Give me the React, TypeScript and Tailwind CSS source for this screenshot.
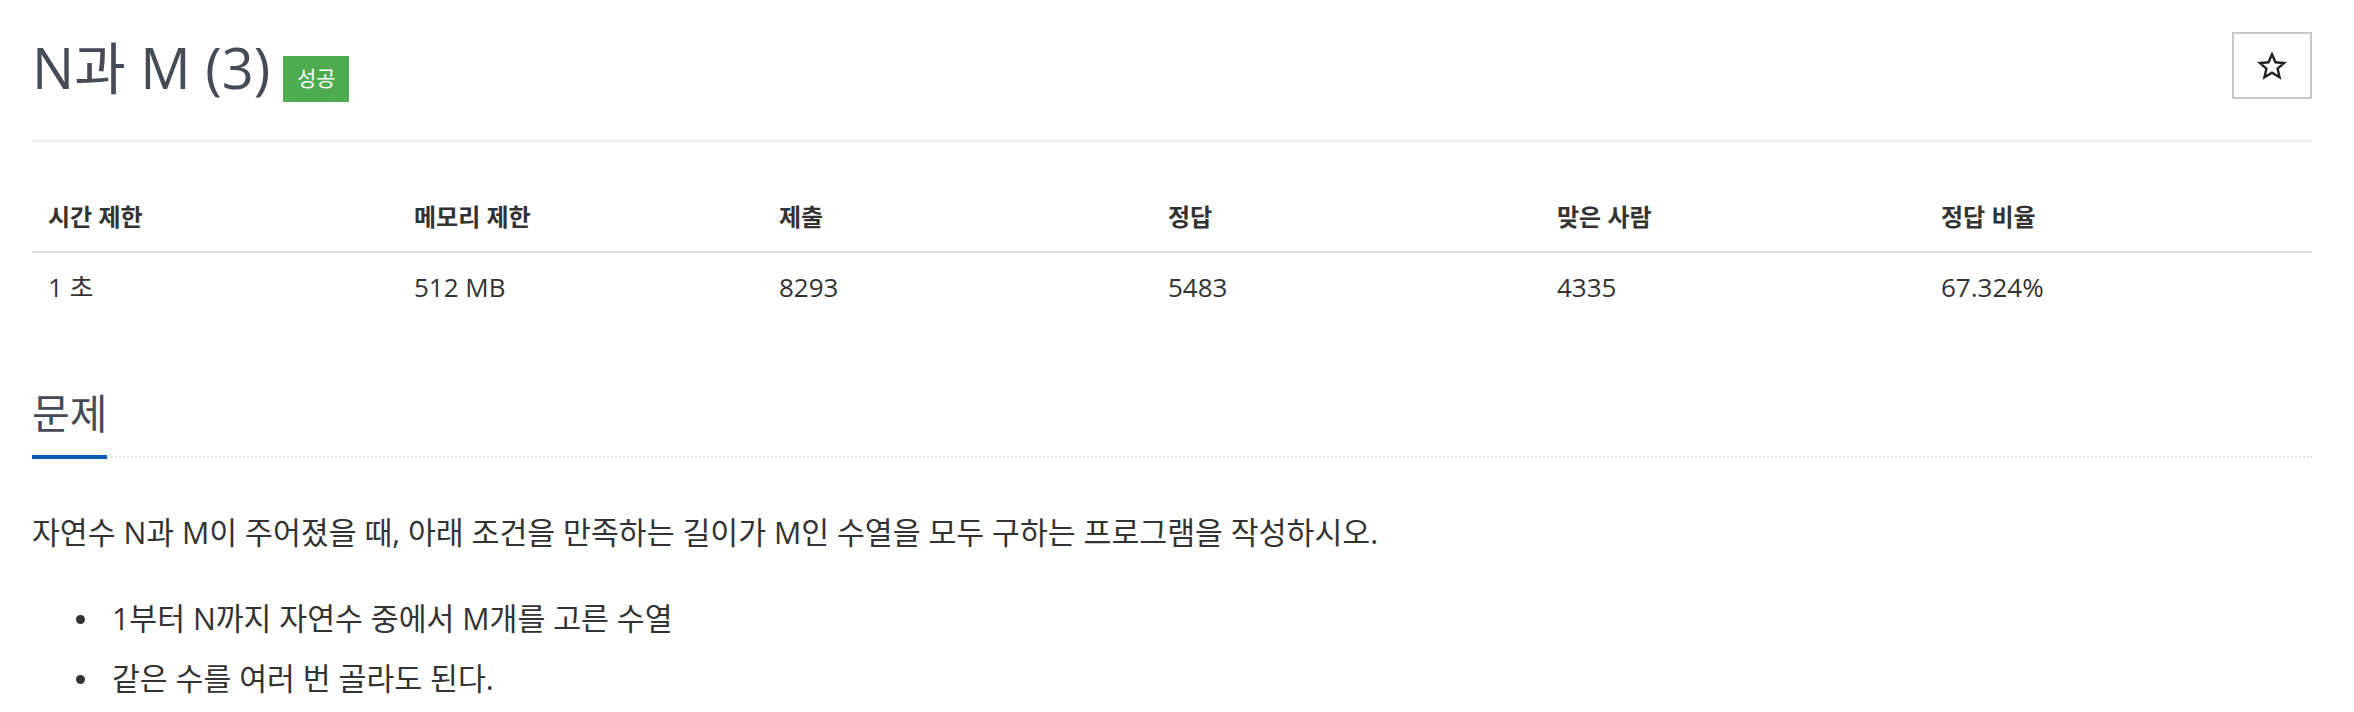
import React from 'react'

const font = { fontFamily: '"Open Sans", "Noto Sans CJK KR", sans-serif' }

const headers = ['시간 제한', '메모리 제한', '제출', '정답', '맞은 사람', '정답 비율']
const values = ['1 초', '512 MB', '8293', '5483', '4335', '67.324%']
const widths = ['w-[366px]', 'w-[365px]', 'w-[389px]', 'w-[389px]', 'w-[384px]', 'w-[387px]']

function StarIcon() {
  return (
    <svg width="30" height="28" viewBox="0 0 24 23" fill="none">
      <path
        d="M12 1.8l2.9 6.6 7.1.6-5.4 4.7 1.6 7-6.2-3.7-6.2 3.7 1.6-7L2 9l7.1-.6z"
        stroke="#222"
        strokeWidth="2"
        strokeLinejoin="miter"
      />
    </svg>
  )
}

export default function App() {
  return (
    <div className="min-h-[712px] w-full bg-white pl-[32px] pr-[42px] pt-[32px]" style={font}>
      {/* Title */}
      <div className="flex h-[67px] items-start justify-between">
        <div className="flex items-start">
          <h1 className="mt-[4px] text-[56px] leading-[62px] font-normal text-[#464c56]">N과 M (3)</h1>
          <span className="ml-[13px] mt-[24px] flex h-[46px] w-[66px] items-center justify-center bg-[#4cac4f] text-[21px] text-white">
            성공
          </span>
        </div>
        <button className="flex h-[67px] w-[80px] items-center justify-center border-2 border-[#c8c8c8] bg-white">
          <StarIcon />
        </button>
      </div>
      <div className="mt-[41px] h-[2px] bg-[#eeeeee]" />

      {/* Limits table */}
      <table className="mt-[41px] w-full table-fixed border-collapse text-[24px] leading-[36px] text-[#333]">
        <colgroup>
          {widths.map((w, i) => (
            <col key={i} className={w} />
          ))}
        </colgroup>
        <thead>
          <tr className="border-b-2 border-[#dddddd]">
            {headers.map((h) => (
              <th key={h} className="pl-[16px] pt-[16px] pb-[16px] text-left font-bold">
                {h}
              </th>
            ))}
          </tr>
        </thead>
        <tbody>
          <tr>
            {values.map((v) => (
              <td key={v} className="pl-[16px] pt-[16px] pb-[16px] text-[26px]">
                {v}
              </td>
            ))}
          </tr>
        </tbody>
      </table>

      {/* Problem section */}
      <section className="mt-[68px]">
        <div className="border-b-2 border-dotted border-[#dde1e7]">
          <h2 className="-mb-[3px] inline-block border-b-4 border-[#0c5cb0] pb-[18px] text-[41px] leading-[48px] font-normal text-[#464c56]">
            문제
          </h2>
        </div>
        <p className="mt-[55px] text-[30.3px] leading-[40px] text-[#333]">
          자연수 N과 M이 주어졌을 때, 아래 조건을 만족하는 길이가 M인 수열을 모두 구하는 프로그램을 작성하시오.
        </p>
        <ul className="mt-[46px]">
          {['1부터 N까지 자연수 중에서 M개를 고른 수열', '같은 수를 여러 번 골라도 된다.'].map((t) => (
            <li key={t} className="mb-[20px] flex items-center text-[30.3px] leading-[40px] text-[#333]">
              <span className="ml-[44px] h-[9px] w-[9px] rounded-full bg-[#333]" />
              <span className="ml-[27px]">{t}</span>
            </li>
          ))}
        </ul>
      </section>
    </div>
  )
}
